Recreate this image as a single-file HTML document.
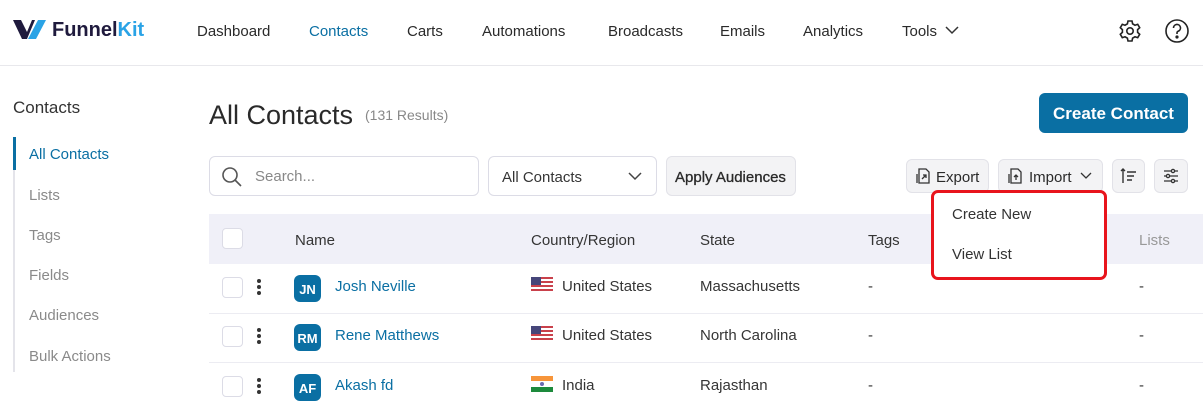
<!DOCTYPE html>
<html><head><style>
*{box-sizing:border-box;margin:0;padding:0}
body{width:1203px;height:410px;overflow:hidden;background:#fff;font-family:"Liberation Sans",sans-serif;color:#353535;position:relative}
.a{position:absolute;white-space:nowrap}
.nav{font-size:15px;top:23px;color:#2a2a2a}
.side{font-size:15px;left:29px;color:#8a8a8a}
.btn{position:absolute;border:1px solid #e2e2e8;border-radius:6px;background:#f3f3f5}
.cb{position:absolute;left:222px;width:21px;height:21px;border:1.5px solid #dcdce6;border-radius:4px;background:#fff}
.dots{position:absolute;left:257px;width:4px}
.dots i{display:block;width:4px;height:4px;border-radius:2px;background:#333;margin-bottom:2px}
.av{position:absolute;left:294px;width:27px;height:27px;border-radius:6px;background:#0a6fa3;color:#fff;font-size:13px;font-weight:bold;text-align:center;line-height:29px}
.nm{position:absolute;left:335px;font-size:15px;color:#0a6fa3}
.cell{position:absolute;font-size:15px;color:#353535}
.row{position:absolute;left:209px;width:994px;height:1px;background:#ececf2}
</style></head><body>
<svg class="a" style="left:12px;top:19px" width="38" height="22" viewBox="0 0 38 22"><path d="M1 1h8l6 12 5-12h3L15 20h-5z" fill="#1f1a3d"/><path d="M26 1h8L24 20h-8z" fill="#2aa3e6"/></svg>
<div class="a" style="left:52px;top:19px;font-size:20px;font-weight:bold;color:#1f1a3d">Funnel<span style="color:#2aa3e6">Kit</span></div>
<div class="a nav" style="left:197px">Dashboard</div>
<div class="a nav" style="left:309px;color:#0a6fa3">Contacts</div>
<div class="a nav" style="left:407px">Carts</div>
<div class="a nav" style="left:482px">Automations</div>
<div class="a nav" style="left:608px">Broadcasts</div>
<div class="a nav" style="left:720px">Emails</div>
<div class="a nav" style="left:803px">Analytics</div>
<div class="a nav" style="left:902px">Tools</div>
<svg class="a" style="left:945px;top:26px" width="14" height="9"><path d="M1 1l6 6 6-6" stroke="#333" stroke-width="1.5" fill="none"/></svg>
<svg class="a" style="left:1118px;top:19px" width="24" height="24" viewBox="0 0 24 24" fill="none" stroke="#222" stroke-width="1.6"><circle cx="12" cy="12" r="3.2"/><path d="M10 2h4l.6 2.8 2.4 1.4 2.7-.9 2 3.4-2.1 1.9v2.8l2.1 1.9-2 3.4-2.7-.9-2.4 1.4L14 22h-4l-.6-2.8-2.4-1.4-2.7.9-2-3.4 2.1-1.9v-2.8L2.3 8.7l2-3.4 2.7.9 2.4-1.4z"/></svg>
<svg class="a" style="left:1164px;top:18px" width="26" height="26" viewBox="0 0 26 26" fill="none" stroke="#222" stroke-width="1.6"><circle cx="13" cy="13" r="11"/><path d="M9.5 10a3.5 3.5 0 1 1 4.5 3.3c-.7.3-1 .9-1 1.7v1"/><circle cx="13" cy="19" r=".8" fill="#222"/></svg>
<div class="a" style="left:0;top:65px;width:1203px;height:1px;background:#e8e8ec"></div>
<div class="a" style="left:13px;top:98px;font-size:17px;color:#333">Contacts</div>
<div class="a" style="left:13px;top:137px;width:2px;height:235px;background:#e4e4ea"></div>
<div class="a" style="left:13px;top:137px;width:3px;height:33px;background:#0a6fa3"></div>
<div class="a side" style="top:146px;color:#0a6fa3">All Contacts</div>
<div class="a side" style="top:187px">Lists</div>
<div class="a side" style="top:227px">Tags</div>
<div class="a side" style="top:267px">Fields</div>
<div class="a side" style="top:307px">Audiences</div>
<div class="a side" style="top:348px">Bulk Actions</div>
<div class="a" style="left:209px;top:100px;font-size:27px;color:#2a2a2a">All Contacts</div>
<div class="a" style="left:365px;top:107px;font-size:14px;color:#888">(131 Results)</div>
<div class="a" style="left:1039px;top:93px;width:149px;height:40px;border-radius:6px;background:#0a6fa3;color:#fff;font-size:17px;font-weight:bold;text-align:center;line-height:41px">Create Contact</div>
<div class="a" style="left:209px;top:156px;width:270px;height:40px;border:1px solid #dcdce6;border-radius:6px"></div>
<svg class="a" style="left:221px;top:166px" width="22" height="22" fill="none" stroke="#555" stroke-width="1.6"><circle cx="9" cy="9" r="7"/><path d="M14 14l6 6"/></svg>
<div class="a" style="left:255px;top:168px;font-size:15px;color:#888">Search...</div>
<div class="a" style="left:488px;top:156px;width:169px;height:40px;border:1px solid #dcdce6;border-radius:6px"></div>
<div class="a" style="left:502px;top:169px;font-size:15px">All Contacts</div>
<svg class="a" style="left:628px;top:172px" width="14" height="9"><path d="M1 1l6 6 6-6" stroke="#444" stroke-width="1.5" fill="none"/></svg>
<div class="btn" style="left:666px;top:156px;width:130px;height:40px"></div>
<div class="a" style="left:675px;top:169px;font-size:15px;color:#2a2a2a;-webkit-text-stroke:0.3px #2a2a2a">Apply Audiences</div>
<div class="btn" style="left:906px;top:159px;width:83px;height:34px"></div>
<svg class="a" style="left:916px;top:168px" width="14" height="16" fill="none" stroke="#333" stroke-width="1.3"><path d="M3 1h7l3 3v11H3z M1 6v9"/><path d="M6 11l4-4M7 7h3v3"/></svg>
<div class="a" style="left:936px;top:169px;font-size:15px;color:#2a2a2a">Export</div>
<div class="btn" style="left:998px;top:159px;width:105px;height:34px"></div>
<svg class="a" style="left:1008px;top:168px" width="14" height="16" fill="none" stroke="#333" stroke-width="1.3"><path d="M3 1h7l3 3v11H3z M1 6v9"/><path d="M8 12V7M6 9l2-2 2 2"/></svg>
<div class="a" style="left:1029px;top:169px;font-size:15px;color:#2a2a2a">Import</div>
<svg class="a" style="left:1080px;top:172px" width="12" height="8"><path d="M1 1l5 5 5-5" stroke="#333" stroke-width="1.3" fill="none"/></svg>
<div class="btn" style="left:1112px;top:159px;width:33px;height:34px"></div>
<svg class="a" style="left:1120px;top:167px" width="18" height="18" stroke="#333" stroke-width="1.4" fill="none"><path d="M3 2v14M1 4l2-2 2 2M7 5h9M7 9h7M7 13h5"/></svg>
<div class="btn" style="left:1154px;top:159px;width:34px;height:34px"></div>
<svg class="a" style="left:1162px;top:167px" width="18" height="18" stroke="#333" stroke-width="1.3" fill="none"><path d="M2 4h14M2 9h14M2 14h14"/><circle cx="11" cy="4" r="1.6" fill="#f3f3f5"/><circle cx="6" cy="9" r="1.6" fill="#f3f3f5"/><circle cx="11" cy="14" r="1.6" fill="#f3f3f5"/></svg>
<div class="a" style="left:209px;top:214px;width:994px;height:50px;background:#f0f0f8"></div>
<div class="cb" style="top:228px"></div>
<div class="cell" style="left:295px;top:232px">Name</div>
<div class="cell" style="left:531px;top:232px">Country/Region</div>
<div class="cell" style="left:700px;top:232px">State</div>
<div class="cell" style="left:868px;top:232px">Tags</div>
<div class="cell" style="left:1139px;top:232px;color:#999">Lists</div>
<div class="row" style="top:313px"></div>
<div class="row" style="top:362px"></div>
<div class="cb" style="top:277px"></div><div class="dots" style="top:279px"><i></i><i></i><i></i></div>
<div class="av" style="top:275px">JN</div><div class="nm" style="top:278px">Josh Neville</div>
<div class="cell" style="left:562px;top:278px">United States</div><div class="cell" style="left:700px;top:278px">Massachusetts</div><div class="cell" style="left:868px;top:278px">-</div><div class="cell" style="left:1139px;top:278px">-</div>
<div class="cb" style="top:326px"></div><div class="dots" style="top:328px"><i></i><i></i><i></i></div>
<div class="av" style="top:324px">RM</div><div class="nm" style="top:327px">Rene Matthews</div>
<div class="cell" style="left:562px;top:327px">United States</div><div class="cell" style="left:700px;top:327px">North Carolina</div><div class="cell" style="left:868px;top:327px">-</div><div class="cell" style="left:1139px;top:327px">-</div>
<div class="cb" style="top:376px"></div><div class="dots" style="top:378px"><i></i><i></i><i></i></div>
<div class="av" style="top:374px">AF</div><div class="nm" style="top:377px">Akash fd</div>
<div class="cell" style="left:562px;top:377px">India</div><div class="cell" style="left:700px;top:377px">Rajasthan</div><div class="cell" style="left:868px;top:377px">-</div><div class="cell" style="left:1139px;top:377px">-</div>
<svg class="a" style="left:531px;top:277px" width="22" height="16"><rect width="22" height="16" fill="#fff"/><g fill="#c9414b"><rect y="0" width="22" height="2"/><rect y="4" width="22" height="2"/><rect y="8" width="22" height="2"/><rect y="12" width="22" height="2"/></g><rect width="10" height="8" fill="#46467a"/></svg>
<svg class="a" style="left:531px;top:326px" width="22" height="16"><rect width="22" height="16" fill="#fff"/><g fill="#c9414b"><rect y="0" width="22" height="2"/><rect y="4" width="22" height="2"/><rect y="8" width="22" height="2"/><rect y="12" width="22" height="2"/></g><rect width="10" height="8" fill="#46467a"/></svg>
<svg class="a" style="left:531px;top:376px" width="22" height="16"><rect width="22" height="5" fill="#f7953a"/><rect y="5" width="22" height="6" fill="#fff"/><rect y="11" width="22" height="5" fill="#1d8a3c"/><circle cx="11" cy="8" r="2" fill="#6b6bb0"/></svg>
<div class="a" style="left:931px;top:190px;width:176px;height:90px;border:3px solid #e8141c;border-radius:7px;background:#fff"></div>
<div class="a" style="left:952px;top:206px;font-size:15px;color:#333">Create New</div>
<div class="a" style="left:952px;top:246px;font-size:15px;color:#333">View List</div>
</body></html>
